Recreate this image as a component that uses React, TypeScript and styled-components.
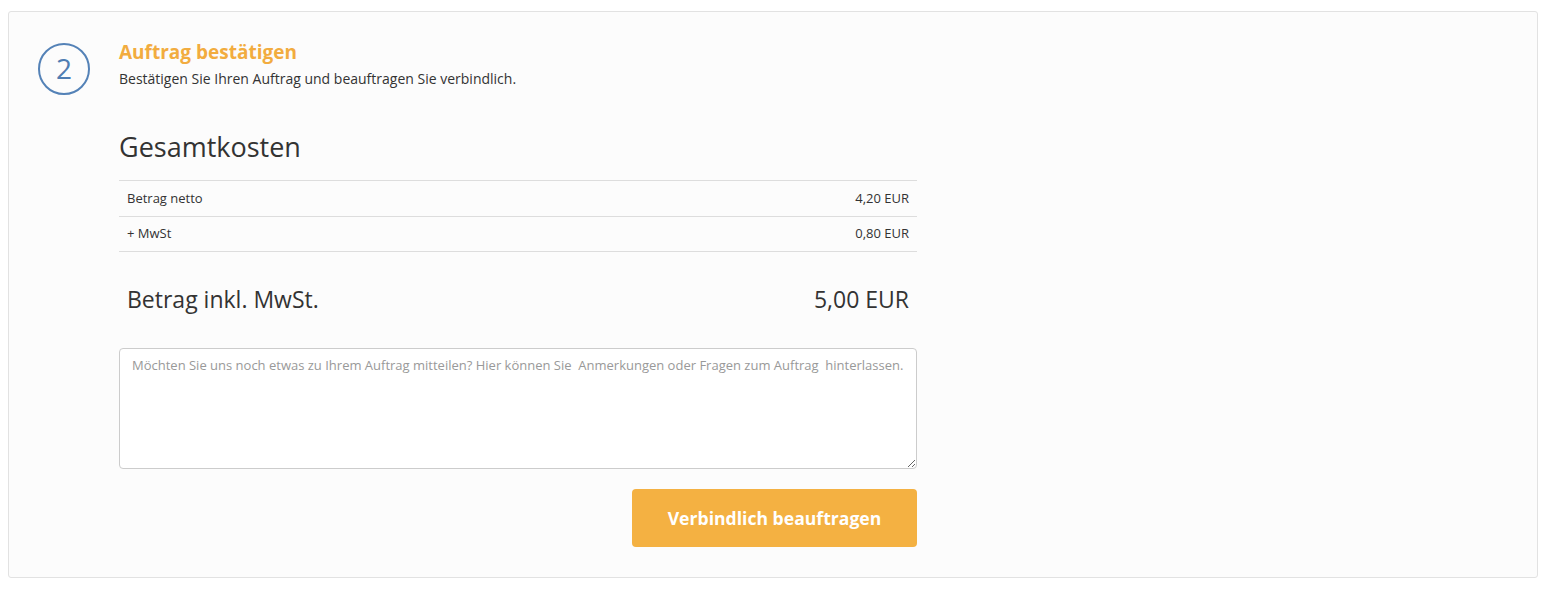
import React from "react";
import styled, { createGlobalStyle } from "styled-components";

const Global = createGlobalStyle`
  html, body { margin: 0; padding: 0; background: #ffffff; }
  body { font-family: "Open Sans", "Liberation Sans", sans-serif; color: #333333; }
  * { box-sizing: border-box; }
`;

const Panel = styled.section`
  margin: 11px 25px 0 8px;
  height: 567px;
  background: #fcfcfc;
  border: 1px solid #e2e2e2;
  border-radius: 3px;
  padding: 28px 30px 29px 29px;
  display: grid;
  grid-template-columns: 52px 798px;
  column-gap: 29px;
  align-items: start;
`;

const StepCircle = styled.div`
  margin-top: 3px;
  width: 52px;
  height: 52px;
  border-radius: 50%;
  border: 2px solid #5482b7;
  color: #4f7db3;
  font-size: 28px;
  line-height: 1;
  display: flex;
  align-items: center;
  justify-content: center;
  padding-bottom: 3px;
`;

const Content = styled.div`
  display: flex;
  flex-direction: column;
`;

const Title = styled.h2`
  margin: 0;
  font-size: 19px;
  line-height: 24px;
  font-weight: 700;
  color: #f2ac3f;
`;

const Subtitle = styled.p`
  margin: 5px 0 0;
  font-size: 14px;
  line-height: 20px;
  color: #333333;
`;

const Heading = styled.h3`
  margin: 41px 0 0;
  font-size: 27px;
  line-height: 34px;
  font-weight: 400;
  color: #333333;
`;

const Table = styled.div`
  margin-top: 16px;
  border-bottom: 1px solid #dddddd;
`;

const Row = styled.div`
  height: 36px;
  border-top: 1px solid #dddddd;
  display: flex;
  align-items: center;
  justify-content: space-between;
  padding: 0 8px 2px;
  font-size: 13px;
  color: #333333;
  &:last-child { height: 35px; }
`;

const TotalRow = styled.div`
  display: flex;
  justify-content: space-between;
  align-items: center;
  padding: 32px 8px 34px;
  font-size: 23px;
  line-height: 30px;
  color: #333333;
`;

const Notes = styled.textarea`
  display: block;
  width: 798px;
  height: 121px;
  border: 1px solid #cccccc;
  border-radius: 4px;
  background: #ffffff;
  padding: 6px 12px;
  font-family: "Open Sans", "Liberation Sans", sans-serif;
  font-size: 13px;
  line-height: 20px;
  color: #555555;
  resize: both;
  &::placeholder { color: #999999; }
`;

const Actions = styled.div`
  margin-top: 20px;
  display: flex;
  justify-content: flex-end;
`;

const Submit = styled.button`
  width: 285px;
  height: 58px;
  border: none;
  border-radius: 4px;
  background: #f4b142;
  color: #ffffff;
  font-family: "Open Sans", "Liberation Sans", sans-serif;
  font-size: 17.6px;
  font-weight: 700;
  cursor: pointer;
`;

const rows = [
  { label: "Betrag netto", value: "4,20 EUR" },
  { label: "+ MwSt", value: "0,80 EUR" },
];

export default function App() {
  return (
    <>
      <Global />
      <Panel>
        <StepCircle>2</StepCircle>
        <Content>
          <Title>Auftrag bestätigen</Title>
          <Subtitle>Bestätigen Sie Ihren Auftrag und beauftragen Sie verbindlich.</Subtitle>
          <Heading>Gesamtkosten</Heading>
          <Table>
            {rows.map((r) => (
              <Row key={r.label}>
                <span>{r.label}</span>
                <span>{r.value}</span>
              </Row>
            ))}
          </Table>
          <TotalRow>
            <span>Betrag inkl. MwSt.</span>
            <span>5,00 EUR</span>
          </TotalRow>
          <Notes placeholder="Möchten Sie uns noch etwas zu Ihrem Auftrag mitteilen? Hier können Sie  Anmerkungen oder Fragen zum Auftrag  hinterlassen." />
          <Actions>
            <Submit>Verbindlich beauftragen</Submit>
          </Actions>
        </Content>
      </Panel>
    </>
  );
}
